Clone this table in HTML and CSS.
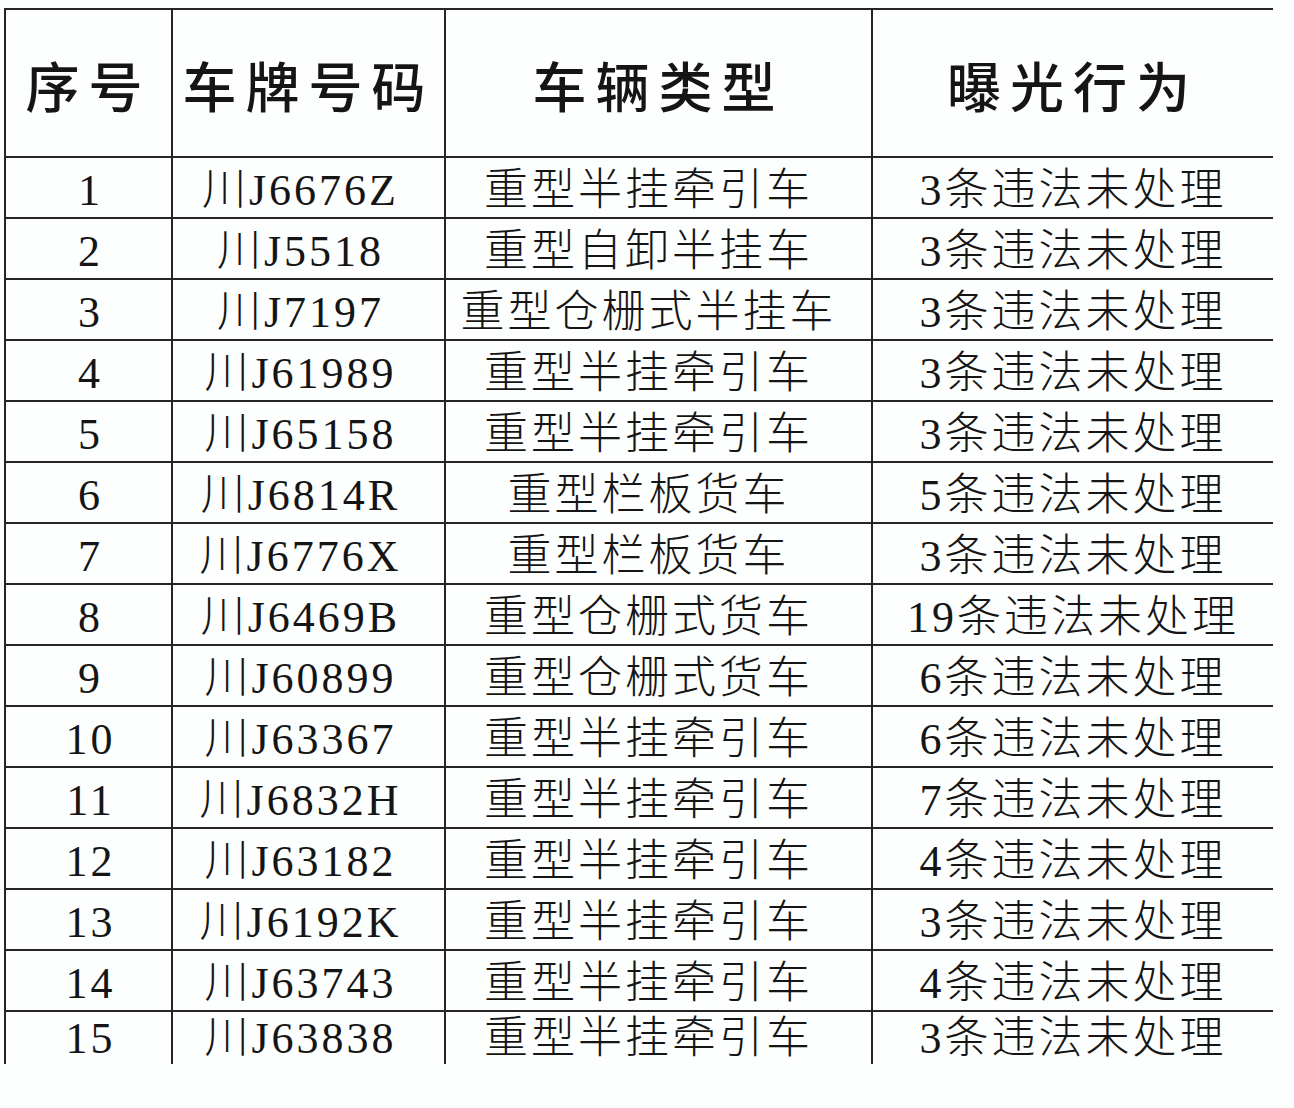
FILE: index.html
```html
<!DOCTYPE html>
<html lang="zh-CN">
<head>
<meta charset="utf-8">
<title>曝光车辆</title>
<link rel="stylesheet" href="styles.css">
</head>
<body>
<table class="sheet">
  <colgroup>
    <col class="c1"><col class="c2"><col class="c3"><col class="c4">
  </colgroup>
  <thead>
    <tr class="head">
      <th>序号</th><th>车牌号码</th><th>车辆类型</th><th>曝光行为</th>
    </tr>
  </thead>
  <tbody>
    <tr><td>1</td><td>川J6676Z</td><td>重型半挂牵引车</td><td>3条违法未处理</td></tr>
    <tr><td>2</td><td>川J5518</td><td>重型自卸半挂车</td><td>3条违法未处理</td></tr>
    <tr><td>3</td><td>川J7197</td><td>重型仓栅式半挂车</td><td>3条违法未处理</td></tr>
    <tr><td>4</td><td>川J61989</td><td>重型半挂牵引车</td><td>3条违法未处理</td></tr>
    <tr><td>5</td><td>川J65158</td><td>重型半挂牵引车</td><td>3条违法未处理</td></tr>
    <tr><td>6</td><td>川J6814R</td><td>重型栏板货车</td><td>5条违法未处理</td></tr>
    <tr><td>7</td><td>川J6776X</td><td>重型栏板货车</td><td>3条违法未处理</td></tr>
    <tr><td>8</td><td>川J6469B</td><td>重型仓栅式货车</td><td>19条违法未处理</td></tr>
    <tr><td>9</td><td>川J60899</td><td>重型仓栅式货车</td><td>6条违法未处理</td></tr>
    <tr><td>10</td><td>川J63367</td><td>重型半挂牵引车</td><td>6条违法未处理</td></tr>
    <tr><td>11</td><td>川J6832H</td><td>重型半挂牵引车</td><td>7条违法未处理</td></tr>
    <tr><td>12</td><td>川J63182</td><td>重型半挂牵引车</td><td>4条违法未处理</td></tr>
    <tr><td>13</td><td>川J6192K</td><td>重型半挂牵引车</td><td>3条违法未处理</td></tr>
    <tr><td>14</td><td>川J63743</td><td>重型半挂牵引车</td><td>4条违法未处理</td></tr>
    <tr class="last"><td>15</td><td>川J63838</td><td>重型半挂牵引车</td><td>3条违法未处理</td></tr>
  </tbody>
</table>
</body>
</html>
```
FILE: styles.css
```css
html, body {
  margin: 0;
  padding: 0;
  background: #fdfefe;
}

body {
  padding: 8px 0 0 4px;
}

.sheet {
  table-layout: fixed;
  border-collapse: separate;
  border-spacing: 0;
  width: 1269px;
  color: #151515;
  font-family: "Liberation Serif", "Noto Sans CJK SC", serif;
}

.c1 { width: 167px; }
.c2 { width: 273px; }
.c3 { width: 427px; }
.c4 { width: 402px; }

.sheet th,
.sheet td {
  border-top: 2px solid #252525;
  border-left: 2px solid #252525;
  padding: 0;
  text-align: center;
  vertical-align: middle;
  white-space: nowrap;
  overflow: hidden;
}

.head {
  height: 148px;
}

.sheet th {
  font-family: "Noto Sans CJK SC", serif;
  font-size: 54px;
  font-weight: 500;
  letter-spacing: 9px;
  padding-top: 4px;
  line-height: 1;
}

.sheet tbody tr {
  height: 61px;
}

.sheet td {
  font-size: 44px;
  font-weight: 300;
  letter-spacing: 3px;
  line-height: 1;
  padding-top: 6px;
}

.sheet td:nth-child(1) {
  padding-left: 4px;
}

.sheet td:nth-child(2) {
  padding-right: 16px;
}

.sheet td:nth-child(3) {
  padding-right: 20px;
}

.sheet tbody tr.last {
  height: 54px;
}

.sheet tr.last td {
  padding-top: 2px;
}
```
